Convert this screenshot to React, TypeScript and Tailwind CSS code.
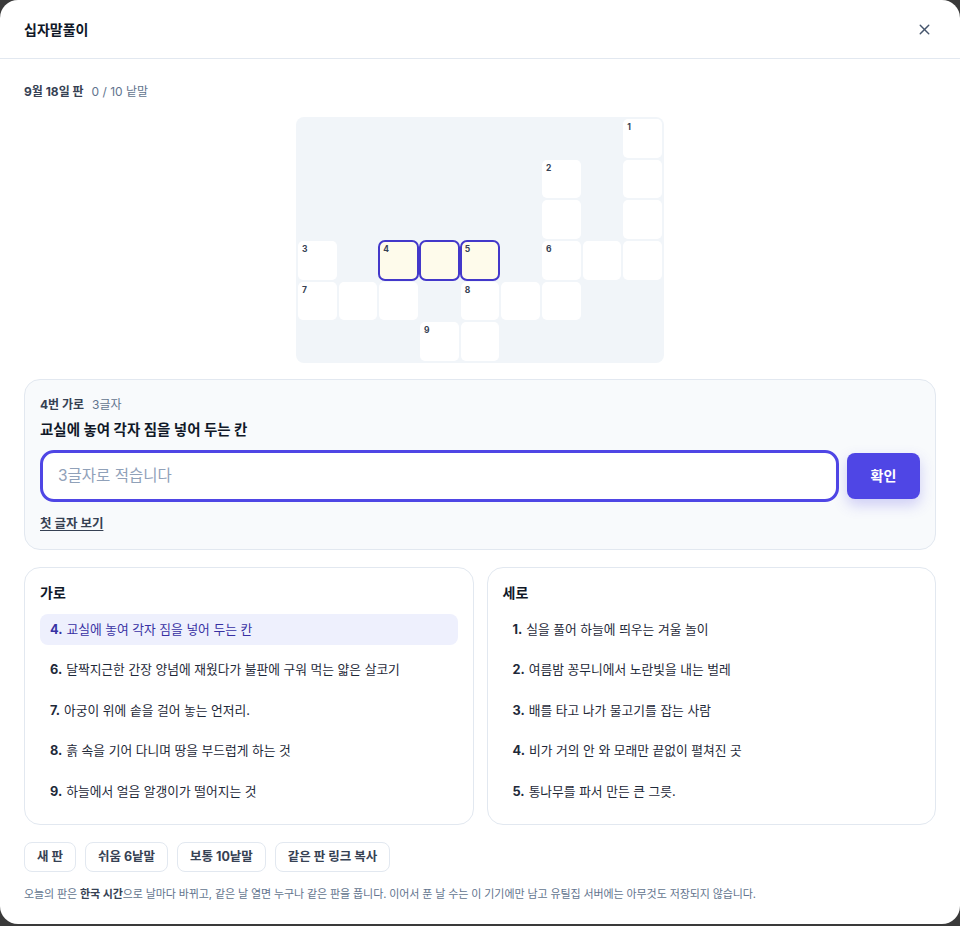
import React from 'react';
import { X } from 'lucide-react';

const font = { fontFamily: 'Inter, "Noto Sans CJK KR", sans-serif' };

// grid: 6 rows x 9 cols, null = blocked, number or 0 = open cell
type Cell = { n?: number; hl?: boolean } | null;
const o = (n?: number, hl?: boolean): Cell => ({ n, hl });
const _ = null;

const grid: Cell[][] = [
  [_, _, _, _, _, _, _, _, o(1)],
  [_, _, _, _, _, _, o(2), _, o()],
  [_, _, _, _, _, _, o(), _, o()],
  [o(3), _, o(4, true), o(undefined, true), o(5, true), _, o(6), o(), o()],
  [o(7), o(), o(), _, o(8), o(), o(), _, _],
  [_, _, _, o(9), o(), _, _, _, _],
];

const across = [
  { n: 4, text: '교실에 놓여 각자 짐을 넣어 두는 칸', active: true },
  { n: 6, text: '달짝지근한 간장 양념에 재웠다가 불판에 구워 먹는 얇은 살코기' },
  { n: 7, text: '아궁이 위에 솥을 걸어 놓는 언저리.' },
  { n: 8, text: '흙 속을 기어 다니며 땅을 부드럽게 하는 것' },
  { n: 9, text: '하늘에서 얼음 알갱이가 떨어지는 것' },
];

const down = [
  { n: 1, text: '실을 풀어 하늘에 띄우는 겨울 놀이' },
  { n: 2, text: '여름밤 꽁무니에서 노란빛을 내는 벌레' },
  { n: 3, text: '배를 타고 나가 물고기를 잡는 사람' },
  { n: 4, text: '비가 거의 안 와 모래만 끝없이 펼쳐진 곳' },
  { n: 5, text: '통나무를 파서 만든 큰 그릇.' },
];

const ClueList = ({ title, items }: { title: string; items: { n: number; text: string; active?: boolean }[] }) => (
  <div className="flex-1 rounded-2xl border border-slate-200 bg-white px-[15px] pt-[15px] pb-[17px]">
    <h3 className="text-[14px] font-bold text-gray-900 leading-5 mb-[11px]">{title}</h3>
    <ul className="flex flex-col gap-[9.5px]">
      {items.map((c) => (
        <li
          key={c.n}
          className={`h-[31px] flex items-center px-[10px] rounded-lg text-[12.75px] ${
            c.active ? 'bg-[#eef0fd] text-[#3730a3]' : 'text-gray-800'
          }`}
        >
          <span className="font-bold mr-1">{c.n}.</span>
          {c.text}
        </li>
      ))}
    </ul>
  </div>
);

export default function App() {
  return (
    <div className="bg-[#3a3a3a] h-[926px] overflow-hidden" style={font}>
      <div className="bg-white h-[924px] rounded-[18px] flex flex-col">
        {/* Header */}
        <div className="h-[59px] border-b border-slate-200 flex items-center justify-between pl-6 pr-[27px]">
          <h1 className="text-[14px] font-bold text-gray-900">십자말풀이</h1>
          <X className="w-[17px] h-[17px] text-slate-600" strokeWidth={2} />
        </div>

        <div className="px-6 pt-[23px]">
          <div className="text-[12px] leading-5 flex gap-2">
            <span className="font-bold text-gray-700">9월 18일 판</span>
            <span className="text-slate-500">0 / 10 낱말</span>
          </div>

          {/* Board */}
          <div className="flex justify-center mt-[15px]">
            <div className="bg-slate-100 rounded-lg p-[2px] grid grid-cols-[repeat(9,38.67px)] grid-rows-[repeat(6,38.67px)] gap-[2px]">
              {grid.flat().map((cell, i) =>
                cell ? (
                  <div
                    key={i}
                    className={`relative ${
                      cell.hl
                        ? '-m-[1px] z-10 rounded-[7px] bg-[#fefbeb] border-2 border-[#4338ca]'
                        : 'rounded-[5px] bg-white'
                    }`}
                  >
                    {cell.n && (
                      <span
                        className={`absolute text-[8.5px] font-bold text-gray-700 leading-none ${
                          cell.hl ? 'top-[3px] left-[3px]' : 'top-[4px] left-[4px]'
                        }`}
                      >
                        {cell.n}
                      </span>
                    )}
                  </div>
                ) : (
                  <div key={i} />
                )
              )}
            </div>
          </div>

          {/* Current clue */}
          <div className="mt-[16px] rounded-2xl border border-slate-200 bg-slate-50 px-[15px] pt-[15px] pb-[15px]">
            <div className="text-[12px] leading-5 flex gap-2">
              <span className="font-bold text-gray-700">4번 가로</span>
              <span className="text-slate-500">3글자</span>
            </div>
            <div className="text-[14.5px] font-bold text-gray-900 mt-[3px] leading-6">교실에 놓여 각자 짐을 넣어 두는 칸</div>
            <div className="flex items-center gap-2 mt-[8px]">
              <input
                className="flex-1 h-[52px] rounded-[14px] border-[3px] border-[#4f46e5] bg-white px-[15px] text-[15.5px] outline-none placeholder:text-slate-400"
                placeholder="3글자로 적습니다"
              />
              <button className="h-[46px] w-[73px] rounded-lg bg-[#4f46e5] text-white text-[14px] font-bold shadow-[0_6px_14px_rgba(79,70,229,0.25)]">
                확인
              </button>
            </div>
            <button className="mt-[13px] text-[12.5px] font-bold text-gray-700 underline underline-offset-2">첫 글자 보기</button>
          </div>

          {/* Clue lists */}
          <div className="flex gap-[13px] mt-[17px]">
            <ClueList title="가로" items={across} />
            <ClueList title="세로" items={down} />
          </div>

          {/* Actions */}
          <div className="flex gap-[9px] mt-[17px]">
            {['새 판', '쉬움 6낱말', '보통 10낱말', '같은 판 링크 복사'].map((b) => (
              <button
                key={b}
                className="h-[30px] px-3 rounded-lg border border-slate-200 bg-white text-[12.5px] font-bold text-gray-700"
              >
                {b}
              </button>
            ))}
          </div>

          <p className="mt-[14px] text-[11px] tracking-[-0.1px] text-slate-500">
            오늘의 판은 <b className="text-gray-700">한국 시간</b>으로 날마다 바뀌고, 같은 날 열면 누구나 같은 판을 풉니다. 이어서 푼 날 수는 이 기기에만 남고 유틸집 서버에는 아무것도 저장되지 않습니다.
          </p>
        </div>
      </div>
    </div>
  );
}
